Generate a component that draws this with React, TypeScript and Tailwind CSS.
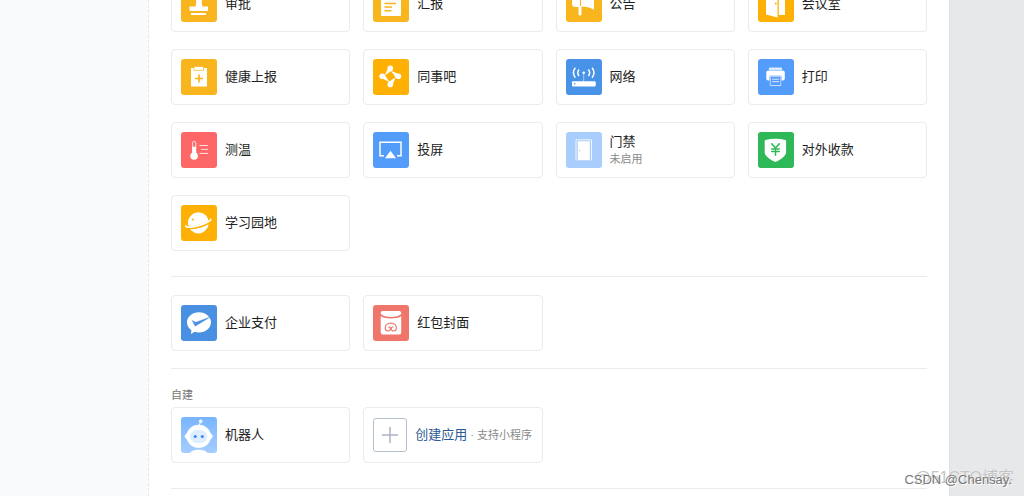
import type { ReactNode } from "react";
import { JapaneseYen, Plus } from "lucide-react";
import { clsx } from "clsx";

type AppItem = {
  name: string;
  note?: string;
  color: string;
  icon: ReactNode;
};

const officeApps: AppItem[] = [
  {
    name: "审批",
    color: "bg-[#f8b51e]",
    icon: (
      <>
        <path d="M18 4a5 5 0 0 1 4 8c-1.500 2-1.500 5-.5 8.500H27V25H8.500v-4.500H14.500c1-4 1-6.500-.5-8.500a5 5 0 0 1 4-8z" />
        <path d="M10 27h15v2H10z" />
      </>
    ),
  },
  {
    name: "汇报",
    color: "bg-[#f8b51e]",
    icon: (
      <>
        <path d="M9 5h12l7 7v17a1 1 0 0 1-1 1H9a1 1 0 0 1-1-1V6a1 1 0 0 1 1-1z" />
        <path d="M11.500 17.500H23M11.500 21H19M11.500 24.700h7" stroke="#f8b51e" strokeWidth="1.500" />
      </>
    ),
  },
  {
    name: "公告",
    color: "bg-[#f8b51e]",
    icon: (
      <>
        <path d="M14 10v11H9.500a3.500 3.500 0 0 1-3.500-3.500v-4A3.500 3.500 0 0 1 9.500 10zM15 10c5 0 9-2 13-5v18.700c-4-2-8-3.200-13-3.200z" />
        <path d="M12.500 20h3v8a1.500 1.500 0 0 1-3 0z" />
      </>
    ),
  },
  {
    name: "会议室",
    color: "bg-[#ffb004]",
    icon: (
      <>
        <path d="M8 6l11.500-2.500v28L8 28.500zM20.800 6H27v23h-6.200z" />
        <circle cx="17.800" cy="17.600" r="1" fill="#ffb004" />
      </>
    ),
  },
  {
    name: "健康上报",
    color: "bg-[#f8b51e]",
    icon: (
      <>
        <path d="M10 9h16v18.500H10z" />
        <rect x="13" y="7.500" width="9.500" height="3.800" stroke="#f8b51e" strokeWidth=".7" />
        <path d="M18 15.500v8M14 19.500h8" stroke="#f8b51e" strokeWidth="1.700" />
      </>
    ),
  },
  {
    name: "同事吧",
    color: "bg-[#ffb004]",
    icon: (
      <>
        <circle cx="17.300" cy="9.200" r="2.800" />
        <circle cx="25.400" cy="17.300" r="2.800" />
        <circle cx="17.300" cy="25.400" r="2.800" />
        <circle cx="9.200" cy="17.300" r="2.800" />
        <path d="M14.500 10.200L19.700 11l-8 5.600zM10.200 20.100L11 14.900l5.600 8zM20.100 24.400L14.900 23.600l8-5.600zM24.400 14.500L23.600 19.700l-5.600-8z" />
      </>
    ),
  },
  {
    name: "网络",
    color: "bg-[#4893e8]",
    icon: (
      <>
        <rect x="6" y="22.300" width="23.700" height="5.200" rx="1" />
        <circle cx="17.700" cy="13.800" r="1.300" />
        <path d="M17.700 14v9" stroke="currentColor" strokeWidth=".5" />
        <path
          d="M9.300 8.700q-3.700 5 0 10M13 10.500q-2.500 3.300 0 6.600M26.100 8.700q3.700 5 0 10M22.400 10.500q2.500 3.300 0 6.600"
          fill="none"
          stroke="currentColor"
          strokeWidth="1.500"
        />
        <circle cx="8.700" cy="24.800" r=".8" fill="#4893e8" />
      </>
    ),
  },
  {
    name: "打印",
    color: "bg-[#549cfa]",
    icon: (
      <>
        <path d="M11 11V9.200q0-.7.7-.7h11.600q.7 0 .7.700V11z" opacity=".8" />
        <rect x="8.300" y="11.400" width="18.500" height="10.200" rx="2" />
        <path d="M11.800 17h11.500v10H11.800z" stroke="#549cfa" strokeWidth=".6" />
        <path d="M12.600 17.800h9.900v8.300h-9.900z" fill="#549cfa" />
        <path d="M14 20.200h7M14 22.700h7" stroke="currentColor" strokeWidth=".8" />
      </>
    ),
  },
  {
    name: "测温",
    color: "bg-[#fe6767]",
    icon: (
      <>
        <rect x="11.600" y="9.300" width="3.200" height="14" rx="1.600" fill="none" stroke="currentColor" strokeWidth=".8" />
        <path d="M11.400 14.800H15v8h-3.600z" />
        <circle cx="13.100" cy="24" r="3.800" />
        <path d="M18.500 13.500H27M20 17.400h7M18.500 21.400H27" stroke="currentColor" strokeWidth=".8" />
      </>
    ),
  },
  {
    name: "投屏",
    color: "bg-[#549cfa]",
    icon: (
      <>
        <path d="M11 23.800H7V10.300h21v13.500h-4" fill="none" stroke="currentColor" strokeWidth="1.500" />
        <path d="M17.500 18.700l5.500 7.600H12z" />
      </>
    ),
  },
  {
    name: "门禁",
    note: "未启用",
    color: "bg-[#a9cdfc]",
    icon: (
      <>
        <path d="M10 28.500V7.800h15.500v20.700" fill="none" stroke="currentColor" strokeWidth=".8" />
        <path d="M11.800 9.300h12v19h-12z" />
        <circle cx="13.600" cy="18.700" r=".8" fill="#a9cdfc" />
      </>
    ),
  },
  {
    name: "对外收款",
    color: "bg-[#2fb857]",
    icon: (
      <>
        <path d="M7.500 8Q17.400 5.500 27.300 8q.8.200.8 1v11.500c0 3.500-5.500 7-9.500 9q-1.200.6-2.400 0c-4-2-9.500-5.500-9.500-9V9q0-.8.800-1z" />
        <JapaneseYen x={10} y={10} width={15} height={15} color="#2fb857" strokeWidth={2.4} />
      </>
    ),
  },
  {
    name: "学习园地",
    color: "bg-[#ffb004]",
    icon: (
      <>
        <circle cx="17.300" cy="18" r="10.400" />
        <path
          d="M5 20.500c-1 3 8 2.500 15.500 0C27 18.300 31.500 15 29 14.500"
          fill="none"
          stroke="#ffb004"
          strokeWidth="3.600"
        />
        <path
          d="M5.200 20.300c-2 3 8 2 14.800-.4 6.500-2.200 11.500-5.400 9-5.700"
          fill="none"
          stroke="currentColor"
          strokeWidth="1.700"
        />
        <path d="M7.200 20C6.500 12 12 7.600 17.300 7.600c5 0 8.800 3 10 7.200-2 2.200-5.500 3.700-9 4.700-4 1.200-8.500 1.800-11.100.5z" />
        <circle cx="11.800" cy="14.500" r="1.100" fill="#ffb004" />
      </>
    ),
  },
];

const payApps: AppItem[] = [
  {
    name: "企业支付",
    color: "bg-[#4a90e2]",
    icon: (
      <>
        <path d="M18 7.200c6.700 0 12 4.400 12 10.100s-5.300 10.200-12 10.200c-1.600 0-3-.2-4.400-.7L10 29l.4-3.800C7.500 23.300 6 20.500 6 17.300 6 11.600 11.300 7.200 18 7.200z" />
        <path d="M11.200 15.500l3 5.700L29.300 12l-14.500 5.300z" fill="#4a90e2" stroke="#4a90e2" strokeWidth=".4" />
      </>
    ),
  },
  {
    name: "红包封面",
    color: "bg-[#f0756b]",
    icon: (
      <>
        <path d="M9.500 6h16.700q2 0 2 2v1c-4 4-16.500 4-20.500 0V8q0-2 1.800-2z" />
        <path d="M7.700 11.300c5 3 15.500 3 20.500 0v16.200q0 2-2 2H9.700q-2 0-2-2z" />
        <path
          d="M15.200 22.300c1.200-.8 2.200.3 2.200 1.500 0 3-5.200 3-5.200-.8 0-3 2.300-4.700 5.600-5 3.300.3 5.600 2 5.600 5 0 3.800-5.200 3.800-5.200.8 0-1.200 1-2.300 2.200-1.500"
          fill="none"
          stroke="#f0756b"
          strokeWidth="1.100"
        />
      </>
    ),
  },
];

const customApps: AppItem[] = [
  {
    name: "机器人",
    color: "bg-linear-to-b from-[#78b5ff] to-[#a5cdff]",
    icon: (
      <>
        <path d="M18 9l1.700-4.500" stroke="currentColor" strokeWidth="1" />
        <circle cx="19.700" cy="4.200" r="1.700" />
        <ellipse cx="17.700" cy="19.300" rx="14" ry="5.500" />
        <ellipse cx="17.700" cy="19.300" rx="12.300" ry="11.500" />
        <rect x="9" y="13" width="17.400" height="13" rx="6.500" fill="#deedff" />
        <circle cx="14.200" cy="19.500" r="1.600" fill="#3d8bf2" />
        <circle cx="21.300" cy="19.500" r="1.600" fill="#3d8bf2" />
        <path d="M8.500 36.500c1.500-5.500 17-5.500 18.500 0z" stroke="#a5cdff" strokeWidth=".6" />
      </>
    ),
  },
];

function AppCard({ item }: { item: AppItem }) {
  return (
    <a
      href="#"
      className="flex h-14 items-center gap-2 rounded border border-[#ebebeb] px-[9px] hover:bg-gray-50"
    >
      <span className={clsx("h-9 w-9 shrink-0 overflow-hidden rounded-[3px] text-white", item.color)}>
        <svg viewBox="0 0 36 36" className="h-9 w-9" fill="currentColor" aria-hidden="true">
          {item.icon}
        </svg>
      </span>
      <span className="flex flex-col pb-0.5">
        <span className="text-[13px] leading-[18px] text-[#222]">{item.name}</span>
        {item.note && <span className="text-[11px] leading-4 text-[#8a8a8a]">{item.note}</span>}
      </span>
    </a>
  );
}

function AppGrid({ items, children }: { items: AppItem[]; children?: ReactNode }) {
  return (
    <div className="grid grid-cols-4 gap-x-[13px] gap-y-[17px]">
      {items.map((item) => (
        <AppCard key={item.name} item={item} />
      ))}
      {children}
    </div>
  );
}

export default function App() {
  return (
    <div className="relative flex h-screen overflow-hidden bg-white font-['Noto_Sans_CJK_SC',sans-serif]">
      <aside className="w-[149px] shrink-0 border-r border-dashed border-[#e6e8ea] bg-[#f8fafc]" />

      <main className="min-w-0 flex-1 px-[22px]">
        {/* the list is scrolled, so its first row starts above the window */}
        <section className="-mt-6 border-b border-[#ebebeb] pb-[25px]">
          <AppGrid items={officeApps} />
        </section>

        <section className="border-b border-[#ebebeb] pt-[18px] pb-[17px]">
          <AppGrid items={payApps} />
        </section>

        <section className="border-b border-[#ebebeb] pt-[17px] pb-[25px]">
          <h2 className="mb-[5px] text-[11px] leading-4 text-[#777]">自建</h2>
          <AppGrid items={customApps}>
            <button
              type="button"
              className="flex h-14 items-center gap-2 rounded border border-[#ebebeb] px-[9px] text-left hover:bg-gray-50"
            >
              <span className="flex h-[34px] w-[34px] shrink-0 items-center justify-center rounded-[3px] border border-[#b4bfcd] text-[#aab4c3]">
                <Plus size={26} strokeWidth={1.4} />
              </span>
              <span className="pb-0.5 text-[13px] leading-[18px] whitespace-nowrap text-[#2c5a94]">
                创建应用
                <span className="font-['Liberation_Sans','Noto_Sans_CJK_SC',sans-serif] text-[11px] text-[#8a8a8a]">
                  {" "}
                  · 支持小程序
                </span>
              </span>
            </button>
          </AppGrid>
        </section>
      </main>

      <aside className="w-[75px] shrink-0 border-l border-[#dfe0e1] bg-[#e7e8e9]" />

      <p className="absolute right-2.5 bottom-1.5 font-['Liberation_Sans','Noto_Sans_CJK_SC',sans-serif] text-base leading-6 text-[#c4c4c4] text-shadow-[0_0_1px_#fff]">
        @51CTO博客
      </p>
      <p className="absolute right-3 bottom-2 font-['Liberation_Sans',sans-serif] text-[13px] leading-4 text-[#777] text-shadow-[1px_1px_0_#fff]">
        CSDN @Chensay.
      </p>
    </div>
  );
}
